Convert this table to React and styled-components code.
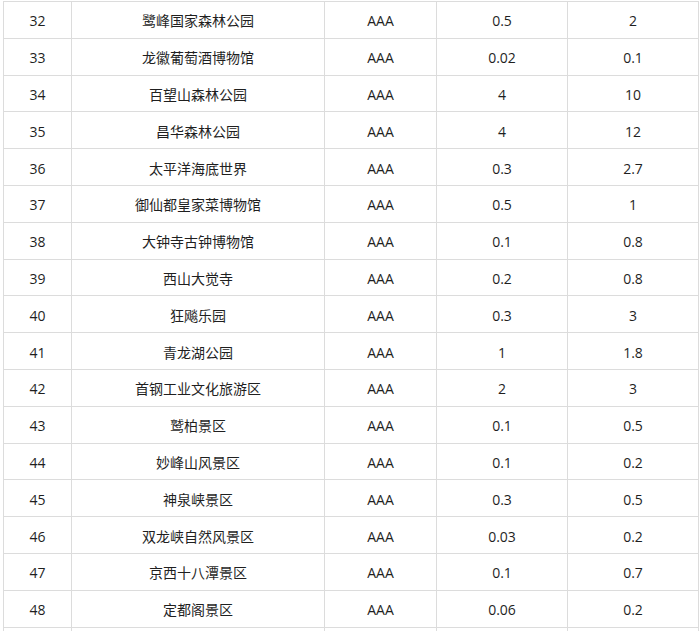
import React from 'react';
import styled, { createGlobalStyle } from 'styled-components';

const GlobalStyle = createGlobalStyle`
    html, body {
        margin: 0;
        padding: 0;
        background: #ffffff;
    }
    body {
        font-family: "Open Sans", "Noto Sans CJK SC", sans-serif;
        color: #1f1f1f;
    }
`;

const Page = styled.div`
    padding: 1px 0 0 3px;
    width: 695px;
`;

const Table = styled.table`
    width: 695px;
    border-collapse: collapse;
    table-layout: fixed;
    font-size: 14px;

    td {
        border: 1px solid #dcdcdc;
        height: 32.8px;
        padding: 3px 0 0 0;
        text-align: center;
        vertical-align: middle;
        white-space: nowrap;
        line-height: 20px;
    }
`;

const Col = styled.col`
    width: ${props => props.w}px;
`;

const rows = [
    ['32', '鹭峰国家森林公园', 'AAA', '0.5', '2'],
    ['33', '龙徽葡萄酒博物馆', 'AAA', '0.02', '0.1'],
    ['34', '百望山森林公园', 'AAA', '4', '10'],
    ['35', '昌华森林公园', 'AAA', '4', '12'],
    ['36', '太平洋海底世界', 'AAA', '0.3', '2.7'],
    ['37', '御仙都皇家菜博物馆', 'AAA', '0.5', '1'],
    ['38', '大钟寺古钟博物馆', 'AAA', '0.1', '0.8'],
    ['39', '西山大觉寺', 'AAA', '0.2', '0.8'],
    ['40', '狂飚乐园', 'AAA', '0.3', '3'],
    ['41', '青龙湖公园', 'AAA', '1', '1.8'],
    ['42', '首钢工业文化旅游区', 'AAA', '2', '3'],
    ['43', '鹫柏景区', 'AAA', '0.1', '0.5'],
    ['44', '妙峰山风景区', 'AAA', '0.1', '0.2'],
    ['45', '神泉峡景区', 'AAA', '0.3', '0.5'],
    ['46', '双龙峡自然风景区', 'AAA', '0.03', '0.2'],
    ['47', '京西十八潭景区', 'AAA', '0.1', '0.7'],
    ['48', '定都阁景区', 'AAA', '0.06', '0.2'],
    ['', '', '', '', '']
];

export default function App() {
    return (
        <Page>
            <GlobalStyle />
            <Table>
                <colgroup>
                    <Col w={68} />
                    <Col w={253} />
                    <Col w={112} />
                    <Col w={131} />
                    <Col w={131} />
                </colgroup>
                <tbody>
                    {rows.map((row, i) => (
                        <tr key={i}>
                            {row.map((cell, j) => <td key={j}>{cell}</td>)}
                        </tr>
                    ))}
                </tbody>
            </Table>
        </Page>
    );
}
